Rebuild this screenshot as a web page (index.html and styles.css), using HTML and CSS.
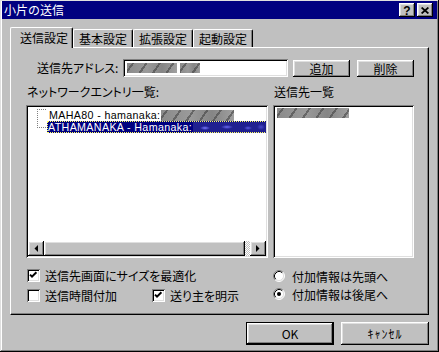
FILE: index.html
```html
<!DOCTYPE html>
<html lang="ja">
<head>
<meta charset="utf-8">
<title>小片の送信</title>
<link rel="stylesheet" href="styles.css">
</head>
<body>
<div class="window">
  <div class="titlebar">
    <span class="title">小片の送信</span>
    <div class="tbtns">
      <span class="tbtn raised help">?</span>
      <span class="tbtn raised"><svg width="8" height="7" viewBox="0 0 8 7"><path d="M0.6 0.5L7.4 6.5M7.4 0.5L0.6 6.5" stroke="#000" stroke-width="1.7"/></svg></span>
    </div>
  </div>
  <div class="content">
    <div class="tabs">
      <div class="tab sel">送信設定</div>
      <div class="tab">基本設定</div>
      <div class="tab">拡張設定</div>
      <div class="tab">起動設定</div>
    </div>
    <div class="panel">
      <div class="addr">
        <span class="addr-label">送信先アドレス:</span>
        <div class="input sunken"><span class="blur grey w50"></span><span class="blur grey w20"></span></div>
        <div class="btn raised small">追加</div>
        <div class="btn raised small second">削除</div>
      </div>
      <div class="lists">
        <div class="col left">
          <div class="lbl">ネットワークエントリ一覧:</div>
          <div class="listbox sunken">
            <div class="tree">
              <svg class="lines" width="19" height="20" viewBox="0 0 19 20">
                <path d="M9 0.5H20M9.5 0V19M9 18.5H19" stroke="#808080" stroke-width="1" stroke-dasharray="1 1" fill="none" shape-rendering="crispEdges"/>
              </svg>
              <div class="items">
                <div class="item"><span class="txt">MAHA80 - hamanaka:</span><span class="blur grey w73"></span></div>
                <div class="item"><span class="txt selected">ATHAMANAKA - Hamanaka:<span class="blur navy"></span></span></div>
              </div>
            </div>
            <div class="hscroll">
              <div class="sbtn raised"><svg width="4" height="7" viewBox="0 0 4 7"><path d="M4 0V7L0.5 3.5Z" fill="#000"/></svg></div>
              <div class="thumb raised"></div>
              <div class="track"></div>
              <div class="sbtn raised"><svg width="4" height="7" viewBox="0 0 4 7"><path d="M0 0V7L3.5 3.5Z" fill="#000"/></svg></div>
            </div>
          </div>
        </div>
        <div class="col right">
          <div class="lbl">送信先一覧</div>
          <div class="listbox sunken plain">
            <span class="blur grey w72"></span>
          </div>
        </div>
      </div>
      <div class="opts">
        <div class="optcol">
          <label class="opt"><span class="cb sunken"><svg width="9" height="9" viewBox="0 0 9 9"><path d="M1 3.6L3 5.6L7.4 1.2" stroke="#000" stroke-width="2" fill="none"/></svg></span>送信先画面にサイズを最適化</label>
          <div class="optrow">
            <label class="opt first"><span class="cb sunken"></span>送信時間付加</label>
            <label class="opt"><span class="cb sunken"><svg width="9" height="9" viewBox="0 0 9 9"><path d="M1 3.6L3 5.6L7.4 1.2" stroke="#000" stroke-width="2" fill="none"/></svg></span>送り主を明示</label>
          </div>
        </div>
        <div class="optcol radios">
          <label class="opt"><svg class="rb" width="12" height="12" viewBox="0 0 12 12"><circle cx="6" cy="6" r="5" fill="#fff"/><path d="M2.11 9.89A5.5 5.5 0 0 1 9.89 2.11" stroke="#808080" fill="none"/><path d="M9.89 2.11A5.5 5.5 0 0 1 2.11 9.89" stroke="#fff" fill="none"/><path d="M2.82 9.18A4.5 4.5 0 0 1 9.18 2.82" stroke="#000" fill="none"/><path d="M9.18 2.82A4.5 4.5 0 0 1 2.82 9.18" stroke="#dfdfdf" fill="none"/></svg>付加情報は先頭へ</label>
          <label class="opt"><svg class="rb" width="12" height="12" viewBox="0 0 12 12"><circle cx="6" cy="6" r="5" fill="#fff"/><path d="M2.11 9.89A5.5 5.5 0 0 1 9.89 2.11" stroke="#808080" fill="none"/><path d="M9.89 2.11A5.5 5.5 0 0 1 2.11 9.89" stroke="#fff" fill="none"/><path d="M2.82 9.18A4.5 4.5 0 0 1 9.18 2.82" stroke="#000" fill="none"/><path d="M9.18 2.82A4.5 4.5 0 0 1 2.82 9.18" stroke="#dfdfdf" fill="none"/><circle cx="6" cy="6" r="2" fill="#000"/></svg>付加情報は後尾へ</label>
        </div>
      </div>
    </div>
    <div class="footer">
      <div class="btn big default"><span class="inner raised">OK</span></div>
      <div class="btn big raised cancel">ｷｬﾝｾﾙ</div>
    </div>
  </div>
</div>
</body>
</html>
```
FILE: styles.css
```css
* { box-sizing: border-box; }
html, body { margin: 0; padding: 0; }
body {
  background: #c0c0c0;
  font-family: "Noto Sans CJK JP", "Liberation Sans", sans-serif;
  font-size: 12px;
  font-feature-settings: "palt";
  color: #000;
  white-space: nowrap;
}
.window {
  width: 439px;
  height: 352px;
  background: #c0c0c0;
  padding: 1px 2px 2px 2px;
  box-shadow: inset -1px -1px #000, inset 1px 1px #dfdfdf, inset -2px -2px #808080, inset 2px 2px #fff;
  display: flex;
  flex-direction: column;
}
.raised {
  background: #c0c0c0;
  box-shadow: inset -1px -1px #000, inset 1px 1px #fff, inset -2px -2px #808080, inset 2px 2px #dfdfdf;
}
.sunken {
  background: #fff;
  box-shadow: inset 1px 1px #808080, inset -1px -1px #fff, inset 2px 2px #000, inset -2px -2px #dfdfdf;
}
.titlebar {
  height: 18px;
  background: #000080;
  color: #fff;
  display: flex;
  align-items: center;
  justify-content: space-between;
  padding: 0 4px 0 2px;
}
.title { line-height: 14px; font-feature-settings: normal; }
.tbtns { display: flex; gap: 2px; }
.tbtn {
  width: 16px;
  height: 14px;
  display: flex;
  align-items: center;
  justify-content: center;
  color: #000;
}
.help {
  font-family: "Liberation Sans", sans-serif;
  font-weight: bold;
  font-size: 12px;
  line-height: 12px;
  padding-top: 1px;
}
.content {
  flex: 1;
  padding: 8px 8px 0 8px;
  display: flex;
  flex-direction: column;
}
.tabs {
  display: flex;
  align-items: flex-end;
  height: 20px;
  position: relative;
  z-index: 1;
}
.tab {
  width: 60px;
  height: 18px;
  background: #c0c0c0;
  border-left: 1px solid #fff;
  border-top: 1px solid #fff;
  border-right: 1px solid #000;
  border-radius: 2px 2px 0 0;
  box-shadow: inset -1px 0 #808080;
  display: flex;
  align-items: center;
  justify-content: center;
  line-height: 14px;
  padding-top: 1px;
  font-feature-settings: normal;
}
.tab.sel {
  width: 63px;
  height: 21px;
  margin-bottom: -1px;
  justify-content: flex-start;
  padding-left: 9px;
  padding-top: 0;
}
.panel {
  height: 268px;
  border: 1px solid;
  border-color: #fff #000 #000 #fff;
  box-shadow: inset -1px -1px #808080;
  padding: 11px 14px 0 15px;
}
.addr {
  display: flex;
  align-items: center;
  height: 18px;
}
.addr-label { margin-left: 11px; width: 86px; line-height: 14px; }
.input {
  width: 165px;
  height: 18px;
  padding: 0 4px;
  display: flex;
  align-items: center;
  gap: 3px;
}
.btn {
  display: flex;
  align-items: center;
  justify-content: center;
  line-height: 14px;
}
.btn.small { width: 57px; height: 17px; margin-left: 5px; padding-top: 1px; }
.btn.small.second { margin-left: 7px; }
.lists {
  display: flex;
  gap: 5px;
  margin-top: 8px;
}
.col.left { width: 242px; }
.col.right { width: 141px; }
.lbl { height: 14px; line-height: 14px; margin-bottom: 6px; padding-left: 1px; }
.listbox {
  height: 153px;
  padding: 2px;
  display: flex;
  flex-direction: column;
  overflow: hidden;
}
.listbox.plain { padding: 3px 4px; }
.tree {
  flex: 1;
  display: flex;
  align-items: flex-start;
  padding-top: 2px;
  overflow-x: clip;
  overflow-y: visible;
}
.lines { flex: none; }
.items { display: flex; flex-direction: column; }
.item {
  height: 12px;
  display: flex;
  align-items: center;
  line-height: 12px;
  font-family: "Liberation Sans", sans-serif;
  font-size: 10.7px;
  letter-spacing: 0.35px;
  font-feature-settings: normal;
}
.txt { padding: 0 1px; display: flex; align-items: center; height: 12px; }
.item:first-child .txt { padding-left: 2px; }
.txt.selected {
  background: #000080;
  color: #fff;
  outline: 1px dotted #ffff60;
  outline-offset: -1px;
  padding-right: 0;
}
.blur { display: inline-block; height: 10px; flex: none; }
.blur.grey {
  background:
    repeating-linear-gradient(125deg, transparent 0 4px, rgba(60,60,60,0.55) 4px 6px, transparent 6px 11px),
    linear-gradient(90deg, #8a8a8a, #9a9a9a 40%, #858585 70%, #a0a0a0);
}
.blur.w50 { width: 50px; }
.blur.w20 { width: 20px; }
.blur.w73 { width: 73px; height: 11px; }
.blur.w72 { width: 72px; height: 10px; }
.blur.navy {
  width: 80px;
  height: 11px;
  margin-left: 1px;
  background:
    radial-gradient(ellipse 5px 2px at 12px 6px, #7a7aff, transparent),
    radial-gradient(ellipse 6px 2px at 34px 5px, #6a6af0, transparent),
    radial-gradient(ellipse 4px 2px at 55px 6px, #5a5ae0, transparent),
    radial-gradient(ellipse 4px 3px at 68px 5px, #4848c8, transparent),
    #202090;
}
.hscroll {
  height: 15px;
  display: flex;
  flex: none;
}
.sbtn {
  width: 16px;
  height: 15px;
  display: flex;
  align-items: center;
  justify-content: center;
}
.thumb { width: 201px; }
.track {
  flex: 1;
  background: repeating-conic-gradient(#c0c0c0 0 25%, #fff 0 50%) 0 0 / 2px 2px;
}
.opts {
  display: flex;
  gap: 5px;
  margin-top: 11px;
}
.optcol {
  width: 242px;
  display: flex;
  flex-direction: column;
  gap: 7px;
}
.optcol.radios { width: 141px; gap: 6px; padding-top: 1px; }
.optrow { display: flex; }
.opt {
  display: flex;
  align-items: center;
  height: 13px;
  line-height: 13px;
}
.radios .opt { height: 12px; }
.opt.first { width: 125px; }
.cb {
  width: 13px;
  height: 13px;
  margin: 0 5px 0 1px;
  padding: 2px;
  display: flex;
  flex: none;
}
.rb { margin-right: 7px; flex: none; }
.footer {
  display: flex;
  justify-content: flex-end;
  gap: 7px;
  margin-top: 7px;
}
.btn.big { width: 88px; height: 23px; }
.btn.cancel { font-feature-settings: normal; letter-spacing: 1px; }
.btn.default { border: 1px solid #000; }
.btn.default .inner {
  width: 100%;
  height: 100%;
  display: flex;
  align-items: center;
  justify-content: center;
}
```
